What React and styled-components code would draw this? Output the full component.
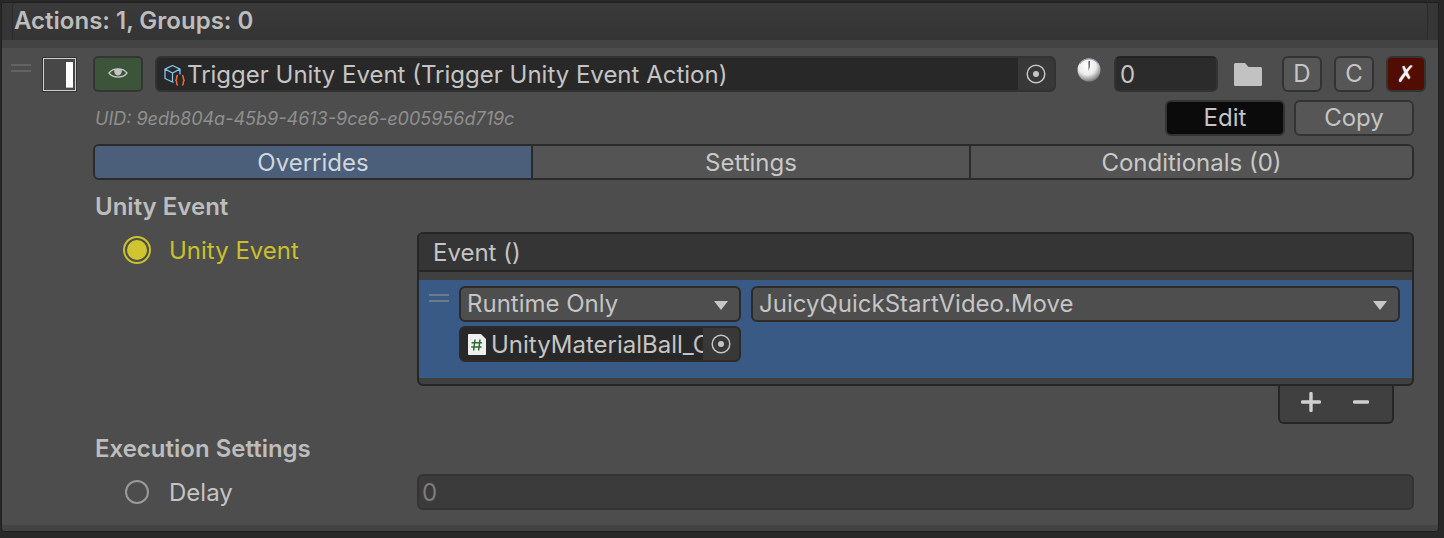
import React from 'react';
import styled, { createGlobalStyle } from 'styled-components';

const GlobalStyle = createGlobalStyle`
  html, body {
    margin: 0;
    padding: 0;
    background: #282828;
  }
  * {
    box-sizing: border-box;
  }
`;

const tabs = ['Overrides', 'Settings', 'Conditionals (0)'];

const EyeIcon = () => (
  <svg width="20" height="14" viewBox="0 0 20 14">
    <path d="M1 7 C5 1.5 15 1.5 19 7 C15 12.5 5 12.5 1 7 Z" fill="none" stroke="#c4c4c4" strokeWidth="1.3" />
    <path d="M6.2 3.4 C8 2.6 12 2.6 13.8 3.4 C14.2 7 12.4 9.4 10 9.4 C7.6 9.4 5.8 7 6.2 3.4 Z" fill="#c4c4c4" />
  </svg>
);

const ScriptableIcon = () => (
  <svg width="24" height="28" viewBox="0 0 24 28">
    <path d="M8.5 5.5 L16 9.2 L16 14.5 M8.5 5.5 L1 9.2 L1 18.5 L9.5 22.5 M1 9.2 L8.5 13 L16 9.2 M8.5 13 L8.5 22" fill="none" stroke="#7cc4ee" strokeWidth="1.3" strokeLinejoin="round" />
    <path d="M14 15.5 C12.2 15.5 12.8 17.6 12.6 19 C12.5 19.8 12 20.2 11.2 20.3 C12 20.4 12.5 20.8 12.6 21.6 C12.8 23 12.2 25 14 25 M18 15.5 C19.8 15.5 19.2 17.6 19.4 19 C19.5 19.8 20 20.2 20.8 20.3 C20 20.4 19.5 20.8 19.4 21.6 C19.2 23 19.8 25 18 25" fill="none" stroke="#f0682a" strokeWidth="1.5" />
  </svg>
);

const TargetIcon = () => (
  <svg width="20" height="20" viewBox="0 0 20 20">
    <circle cx="10" cy="10" r="8.8" fill="none" stroke="#c4c4c4" strokeWidth="1.5" />
    <circle cx="10" cy="10" r="3" fill="#c4c4c4" />
  </svg>
);

const ClockIcon = () => (
  <svg width="24" height="26" viewBox="0 0 24 26">
    <defs>
      <radialGradient id="clockFace" cx="42%" cy="32%" r="70%">
        <stop offset="0%" stopColor="#ffffff" />
        <stop offset="55%" stopColor="#ececec" />
        <stop offset="100%" stopColor="#777777" />
      </radialGradient>
    </defs>
    <circle cx="12" cy="13" r="11.5" fill="url(#clockFace)" />
    <path d="M2.5 7 A11.5 11.5 0 0 1 21.5 7" fill="none" stroke="#8e9aa6" strokeWidth="1.2" />
    <path d="M11.4 4 L13 4 L12.8 10 L11.6 14 Z" fill="#5f5a55" />
  </svg>
);

const FolderIcon = () => (
  <svg width="28" height="23" viewBox="0 0 28 23">
    <path d="M1.5 0 H11 L14.5 4 H26.5 Q28 4 28 5.5 V21.5 Q28 23 26.5 23 H1.5 Q0 23 0 21.5 V1.5 Q0 0 1.5 0 Z" fill="#c2c2c2" />
  </svg>
);

const ScriptIcon = () => (
  <svg width="18" height="21" viewBox="0 0 18 21">
    <path d="M0 1 Q0 0 1 0 H13 L18 5 V20 Q18 21 17 21 H1 Q0 21 0 20 Z" fill="#efefef" />
    <path d="M7 5.5 L5.6 16.5 M12 5.5 L10.6 16.5 M3.6 8.8 H14 M3.2 13 H13.6" stroke="#2f6b34" strokeWidth="1.5" fill="none" />
  </svg>
);

const PlusIcon = () => (
  <svg width="20" height="20" viewBox="0 0 20 20">
    <path d="M10 1.5 V18.5 M1.5 10 H18.5" stroke="#cfcfcf" strokeWidth="3.4" strokeLinecap="round" />
  </svg>
);

const MinusIcon = () => (
  <svg width="16" height="20" viewBox="0 0 16 20">
    <path d="M1.5 10 H14.5" stroke="#cfcfcf" strokeWidth="3.4" strokeLinecap="round" />
  </svg>
);

const App = () => {
  return (
    <Page>
      <GlobalStyle />
      <Frame>
        <TitleBar>Actions: 1, Groups: 0</TitleBar>
        <Strip />
        <Panel>
          <ActionRow>
            <DragHandle $width={20} />
            <ToggleBox>
              <ToggleBar />
            </ToggleBox>
            <EyeButton>
              <EyeIcon />
            </EyeButton>
            <ObjectField>
              <ScriptableIcon />
              <ObjectName>Trigger Unity Event (Trigger Unity Event Action)</ObjectName>
              <PickerCap>
                <TargetIcon />
              </PickerCap>
            </ObjectField>
            <ClockSlot>
              <ClockIcon />
            </ClockSlot>
            <TimeInput>0</TimeInput>
            <FolderSlot>
              <FolderIcon />
            </FolderSlot>
            <SquareButton>D</SquareButton>
            <SquareButton>C</SquareButton>
            <DeleteButton>✗</DeleteButton>
          </ActionRow>

          <Body>
            <UidRow>
              <Uid>UID: 9edb804a-45b9-4613-9ce6-e005956d719c</Uid>
              <WideButton $active>Edit</WideButton>
              <WideButton>Copy</WideButton>
            </UidRow>

            <TabBar>
              {tabs.map((tab, i) => (
                <Tab key={tab} $active={i === 0}>{tab}</Tab>
              ))}
            </TabBar>

            <SectionTitle $top={12}>Unity Event</SectionTitle>

            <EventRow>
              <RadioLabel $color="#c9c02c">
                <RadioOn>
                  <RadioDot />
                </RadioOn>
                Unity Event
              </RadioLabel>
              <EventColumn>
                <EventBox>
                  <EventHeader>Event ()</EventHeader>
                  <EventStrip />
                  <EventList>
                    <DragHandle $width={20} $color="#6f7a88" />
                    <EventGrid>
                      <Dropdown>
                        Runtime Only
                        <Caret />
                      </Dropdown>
                      <Dropdown>
                        JuicyQuickStartVideo.Move
                        <Caret />
                      </Dropdown>
                      <ScriptField>
                        <ScriptIcon />
                        <ScriptName>UnityMaterialBall_C</ScriptName>
                        <ScriptPicker>
                          <TargetIcon />
                        </ScriptPicker>
                      </ScriptField>
                    </EventGrid>
                  </EventList>
                  <ListFoot />
                </EventBox>
                <FootTab>
                  <PlusIcon />
                  <MinusIcon />
                </FootTab>
              </EventColumn>
            </EventRow>

            <SectionTitle $top={10}>Execution Settings</SectionTitle>

            <DelayRow>
              <RadioLabel $color="#c4c4c4" $indent={32} $gap={20}>
                <RadioOff />
                Delay
              </RadioLabel>
              <DelayInput>0</DelayInput>
            </DelayRow>
          </Body>
        </Panel>
        <BottomStrip />
      </Frame>
    </Page>
  );
};

const Page = styled.div`
  width: 1444px;
  height: 538px;
  overflow: hidden;
  background: #282828;
  padding: 2px 5px 0 1px;
  font-family: Inter, "Noto Sans", sans-serif;
  color: #c4c4c4;
`;
const Frame = styled.div`
  height: 530px;
  background: #363636;
  border: 1px solid #1f1f1f;
  border-radius: 2px 2px 4px 4px;
  overflow: hidden;
  display: flex;
  flex-direction: column;
`;
const TitleBar = styled.div`
  flex: none;
  height: 37px;
  margin: 0 10px;
  padding-left: 1px;
  background: linear-gradient(#3a3a3a, #343434);
  border-left: 1px solid #2a2a2a;
  border-right: 1px solid #2a2a2a;
  border-radius: 4px 4px 0 0;
  font-size: 24px;
  font-weight: 600;
  line-height: 36px;
  color: #bdbdbd;
`;
const Strip = styled.div`
  flex: none;
  height: 8px;
  background: #434343;
`;
const Panel = styled.div`
  flex: 1;
  background: #4d4d4d;
  padding: 8px 0 0 9px;
`;
const BottomStrip = styled.div`
  flex: none;
  height: 6px;
  background: #434343;
`;
const ActionRow = styled.div`
  display: flex;
  align-items: flex-start;
  height: 36px;
`;
const DragHandle = styled.div`
  flex: none;
  width: ${(p) => p.$width}px;
  height: 8px;
  margin-top: 8px;
  border-top: 2px solid ${(p) => p.$color || '#636363'};
  border-bottom: 2px solid ${(p) => p.$color || '#636363'};
`;
const ToggleBox = styled.div`
  flex: none;
  width: 33px;
  height: 33px;
  margin: 2px 0 0 12px;
  border: 1px solid #d0d0d0;
  outline: 1px solid #333;
  background: #474747;
  padding: 3px 2px 2px 0;
  display: flex;
  justify-content: flex-end;
`;
const ToggleBar = styled.div`
  width: 7px;
  background: #ffffff;
  border-bottom: 1px solid #bbb;
`;
const EyeButton = styled.div`
  flex: none;
  width: 50px;
  height: 36px;
  margin-left: 17px;
  background: #3c543a;
  border: 2px solid #353535;
  border-radius: 5px;
  display: flex;
  align-items: center;
  justify-content: center;
  padding-bottom: 3px;
`;
const ObjectField = styled.div`
  flex: none;
  width: 901px;
  height: 36px;
  margin-left: 12px;
  background: #282828;
  border: 2px solid #333;
  border-radius: 6px;
  display: flex;
  align-items: center;
  padding-left: 7px;
  overflow: hidden;
`;
const ObjectName = styled.div`
  flex: 1;
  margin-left: -1px;
  font-size: 24px;
  white-space: nowrap;
`;
const PickerCap = styled.div`
  flex: none;
  width: 36px;
  height: 100%;
  background: #383838;
  display: flex;
  align-items: center;
  justify-content: center;
`;
const ClockSlot = styled.div`
  flex: none;
  width: 24px;
  margin: 1px 0 0 21px;
`;
const TimeInput = styled.div`
  flex: none;
  width: 104px;
  height: 36px;
  margin-left: 13px;
  padding-left: 4px;
  background: #2b2b2b;
  border: 2px solid #333;
  border-top-color: #232323;
  border-radius: 6px;
  font-size: 24px;
  line-height: 33px;
`;
const FolderSlot = styled.div`
  flex: none;
  width: 28px;
  height: 36px;
  margin: 0 20px 0 16px;
  padding-top: 7px;
`;
const SquareButton = styled.div`
  flex: none;
  width: 40px;
  height: 36px;
  margin-right: 12px;
  background: #565656;
  border: 2px solid #333;
  border-radius: 6px;
  font-size: 24px;
  line-height: 31px;
  text-align: center;
`;
const DeleteButton = styled.div`
  flex: none;
  width: 40px;
  height: 36px;
  background: #520d03;
  border: 2px solid #333;
  border-radius: 6px;
  color: #f4f4f4;
  font-family: "DejaVu Sans", sans-serif;
  font-size: 23px;
  font-weight: 700;
  line-height: 32px;
  text-align: center;
`;
const Body = styled.div`
  width: 1321px;
  margin-left: 82px;
`;
const UidRow = styled.div`
  display: flex;
  align-items: center;
  height: 36px;
  margin-top: 8px;
  gap: 9px;
`;
const Uid = styled.div`
  flex: 1;
  padding-left: 2px;
  font-size: 18px;
  font-style: italic;
  color: #8f8f8f;
`;
const WideButton = styled.div`
  flex: none;
  width: 120px;
  height: 36px;
  background: ${(p) => (p.$active ? '#0b0b0b' : '#565656')};
  border: 2px solid #333;
  border-radius: 6px;
  font-size: 24px;
  line-height: 31px;
  text-align: center;
`;
const TabBar = styled.div`
  display: grid;
  grid-template-columns: 436px 438px 1fr;
  height: 36px;
  margin-top: 8px;
  border: 2px solid #2b2b2b;
  border-radius: 6px;
  overflow: hidden;
`;
const Tab = styled.div`
  background: ${(p) => (p.$active ? '#4b5f7b' : '#545454')};
  border-left: ${(p) => (p.$active ? '0' : '2px solid #2b2b2b')};
  font-size: 24px;
  line-height: 33px;
  text-align: center;
  color: ${(p) => (p.$active ? '#d0d5db' : '#c8c8c8')};
`;
const SectionTitle = styled.div`
  margin-top: ${(p) => p.$top}px;
  padding-left: 2px;
  font-size: 24px;
  font-weight: 600;
  line-height: 30px;
  color: #bdbdbd;
`;
const EventRow = styled.div`
  display: flex;
  margin-top: 10px;
`;
const RadioLabel = styled.div`
  flex: none;
  width: 324px;
  height: 36px;
  display: flex;
  align-items: center;
  gap: ${(p) => (p.$gap ? p.$gap : 18)}px;
  padding-left: ${(p) => (p.$indent ? p.$indent : 30)}px;
  font-size: 24px;
  color: ${(p) => p.$color};
`;
const RadioOn = styled.div`
  flex: none;
  width: 28px;
  height: 28px;
  border: 2px solid #c9c02c;
  border-radius: 50%;
  display: flex;
  align-items: center;
  justify-content: center;
`;
const RadioDot = styled.div`
  width: 20px;
  height: 20px;
  border-radius: 50%;
  background: #cfc62f;
`;
const RadioOff = styled.div`
  flex: none;
  width: 24px;
  height: 24px;
  border: 2px solid #9a9a9a;
  border-radius: 50%;
`;
const EventColumn = styled.div`
  flex: 1;
  min-width: 0;
`;
const EventBox = styled.div`
  height: 154px;
  background: #404040;
  border: 2px solid #262626;
  border-radius: 6px;
  overflow: hidden;
`;
const EventHeader = styled.div`
  height: 38px;
  padding-left: 14px;
  background: #353535;
  border-bottom: 2px solid #262626;
  font-size: 24px;
  line-height: 37px;
`;
const EventStrip = styled.div`
  height: 8px;
`;
const EventList = styled.div`
  display: flex;
  height: 98px;
  padding: 6px 0 0 10px;
  background: #3a5a86;
`;
const EventGrid = styled.div`
  flex: 1;
  display: grid;
  grid-template-columns: 282px 649px;
  grid-auto-rows: 36px;
  gap: 4px 10px;
  margin-left: 10px;
`;
const Dropdown = styled.div`
  position: relative;
  height: 36px;
  padding-left: 6px;
  background: #4e4e4e;
  border: 2px solid #2b2b2b;
  border-radius: 6px;
  font-size: 24px;
  line-height: 31px;
  white-space: nowrap;
`;
const Caret = styled.div`
  position: absolute;
  right: 11px;
  top: 13px;
  width: 0;
  height: 0;
  border-left: 7.5px solid transparent;
  border-right: 7.5px solid transparent;
  border-top: 9px solid #c8c8c8;
`;
const ScriptField = styled.div`
  height: 36px;
  background: #282828;
  border: 2px solid #2b2b2b;
  border-radius: 6px;
  display: flex;
  align-items: center;
  padding-left: 7px;
  overflow: hidden;
`;
const ScriptName = styled.div`
  flex: 1;
  min-width: 0;
  margin-left: 5px;
  overflow: hidden;
  font-size: 24px;
  white-space: nowrap;
`;
const ScriptPicker = styled.div`
  flex: none;
  width: 36px;
  height: 100%;
  background: #383838;
  display: flex;
  align-items: center;
  justify-content: center;
`;
const ListFoot = styled.div`
  height: 6px;
`;
const FootTab = styled.div`
  width: 116px;
  height: 38px;
  margin: 0 20px 0 auto;
  background: #404040;
  border: 2px solid #262626;
  border-top: 0;
  border-radius: 0 0 6px 6px;
  display: flex;
  align-items: center;
  gap: 32px;
  padding: 0 0 4px 21px;
`;
const DelayRow = styled.div`
  display: flex;
  align-items: center;
  margin-top: 10px;
`;
const DelayInput = styled.div`
  flex: 1;
  height: 36px;
  padding-left: 3px;
  background: #3b3b3b;
  border: 2px solid #333;
  border-radius: 6px;
  font-size: 24px;
  line-height: 33px;
  color: #7d7d7d;
`;

export default App;
